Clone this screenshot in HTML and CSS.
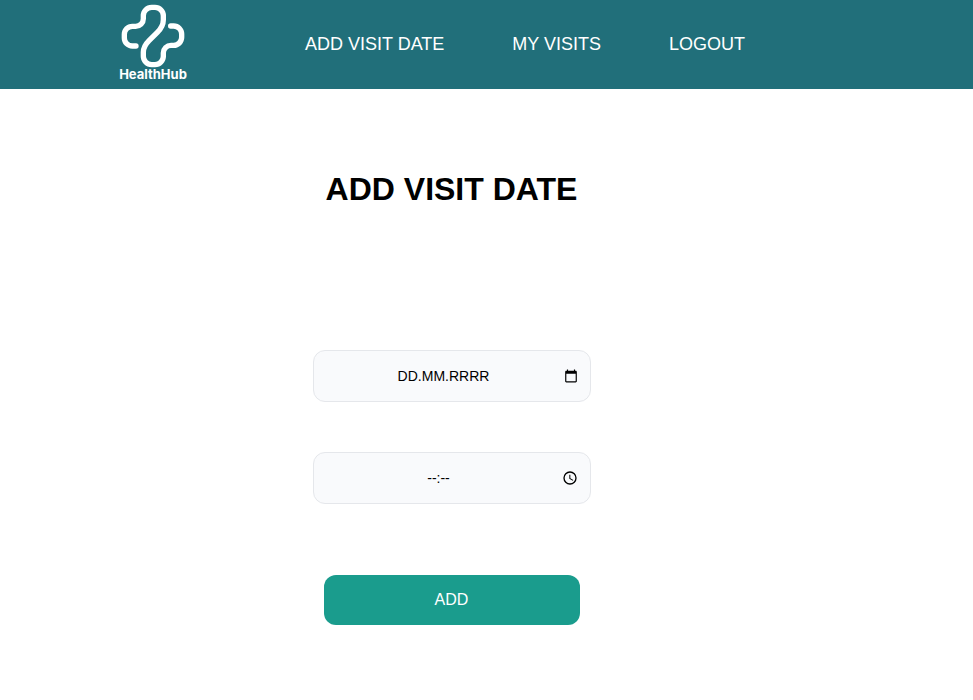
FILE: index.html
```html
<!DOCTYPE html>
<html lang="en">
<head>
<meta charset="utf-8">
<meta name="viewport" content="width=device-width, initial-scale=1">
<title>HealthHub</title>
<link rel="stylesheet" href="styles.css">
</head>
<body>
<header class="header">
  <a class="logo" href="#">
    <svg class="logo-mark" viewBox="48 10 192 192" aria-hidden="true">
      <path d="M93 136H82A24 24 0 0 1 58 112V101A24 24 0 0 1 82 77H92A23 23 0 0 0 115 54V45A25 25 0 0 1 140 20H150A25 25 0 0 1 175 45V57C175 72 169 83 157 95L132 120C120 132 115 141 115 155V167A25 25 0 0 0 140 192H150A25 25 0 0 0 175 167V157A23 23 0 0 1 198 134H206A24 24 0 0 0 230 110V100A24 24 0 0 0 206 76H197"/>
    </svg>
    <span class="logo-name">HealthHub</span>
  </a>
  <nav class="nav">
    <a href="#">ADD VISIT DATE</a>
    <a href="#">MY VISITS</a>
    <a href="#">LOGOUT</a>
  </nav>
</header>
<main class="main">
  <h1 class="title">ADD VISIT DATE</h1>
  <form class="form">
    <div class="field">
      <input type="text" aria-label="Visit date" placeholder="DD.MM.RRRR">
      <svg class="field-icon" viewBox="0 0 24 24" aria-hidden="true"><path d="M20 3h-1V1h-2v2H7V1H5v2H4c-1.100 0-2 .9-2 2v16c0 1.100.9 2 2 2h16c1.100 0 2-.9 2-2V5c0-1.100-.9-2-2-2zm0 18H4V8h16v13z"/></svg>
    </div>
    <div class="field">
      <input class="time" type="text" aria-label="Visit time" placeholder="--:--">
      <svg class="field-icon clock" viewBox="0 0 24 24" aria-hidden="true"><path d="M12 2a10 10 0 1 0 0 20 10 10 0 0 0 0-20zm0 18a8 8 0 1 1 0-16 8 8 0 0 1 0 16zM12.500 7H11v6l5.200 3.200.8-1.300-4.500-2.700z"/></svg>
    </div>
    <button class="submit" type="submit">ADD</button>
  </form>
</main>
</body>
</html>
```
FILE: styles.css
```css
* {
  box-sizing: border-box;
}

body {
  margin: 0;
  background: #fff;
  color: #000;
  font-family: "Liberation Sans", Arial, sans-serif;
}

.header {
  display: flex;
  align-items: center;
  gap: 117px;
  padding: 4px 118px 8px;
  background: #216f7a;
}

.logo {
  display: flex;
  flex-direction: column;
  align-items: center;
  width: 70px;
  color: #fff;
  text-decoration: none;
}

.logo-mark {
  width: 64px;
  height: 64px;
  fill: none;
  stroke: #fff;
  stroke-width: 16;
  stroke-linecap: round;
}

.logo-name {
  font: 700 13px/13px Inter, sans-serif;
}

.nav {
  display: flex;
  gap: 68px;
  padding-top: 3px;
}

.nav a {
  color: #fff;
  font-size: 18px;
  line-height: 24px;
  text-decoration: none;
  white-space: nowrap;
}

.main {
  display: flex;
  flex-direction: column;
  align-items: center;
  padding: 80px 70px 72px 0;
}

.title {
  margin: 0;
  font-size: 32px;
  line-height: 40px;
}

.form {
  display: flex;
  flex-direction: column;
  align-items: center;
  gap: 50px;
  margin-top: 141px;
}

.field {
  position: relative;
}

.field input {
  display: block;
  width: 278px;
  height: 52px;
  padding: 0 30px 0 14px;
  border: 1px solid #e5e7eb;
  border-radius: 12px;
  background: #f9fafc;
  font: 14px "Liberation Sans", Arial, sans-serif;
  text-align: center;
}

.field .time {
  padding-right: 40px;
}

.field input::placeholder {
  color: #000;
  opacity: 1;
}

.field-icon {
  position: absolute;
  top: 19px;
  right: 13px;
  width: 14px;
  height: 14px;
}

.clock {
  top: 18px;
  width: 16px;
  height: 16px;
}

.submit {
  width: 256px;
  height: 50px;
  margin-top: 21px;
  border: 0;
  border-radius: 12px;
  background: #1a9c8d;
  color: #fff;
  font: 16px "Liberation Sans", Arial, sans-serif;
}
```
